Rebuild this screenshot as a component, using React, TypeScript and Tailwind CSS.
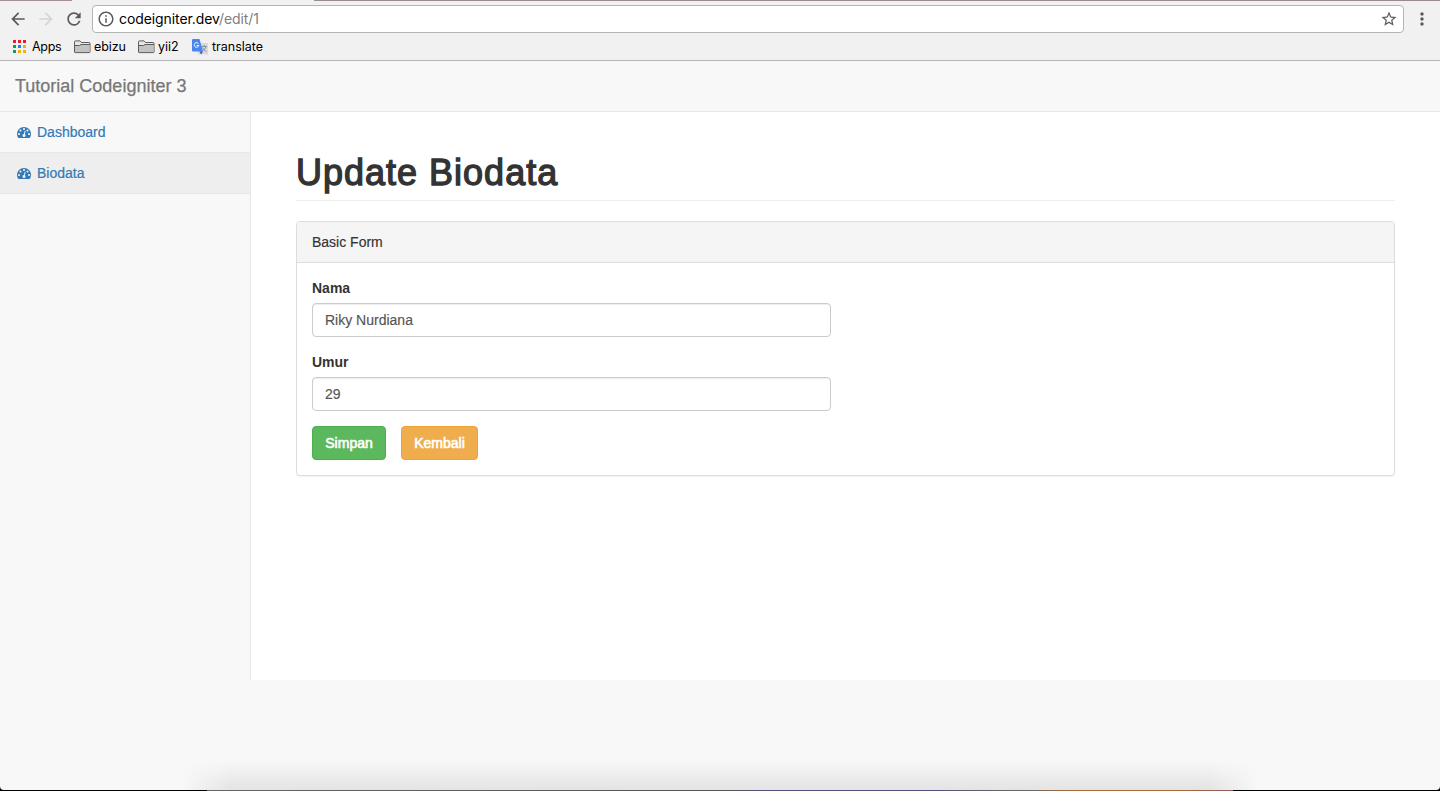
import React from 'react';
import { MdArrowBack, MdArrowForward, MdRefresh, MdStarBorder, MdInfoOutline, MdMoreVert } from 'react-icons/md';

const APP_DOTS = [
  'bg-[#ea1c24]', 'bg-[#ea1c24]', 'bg-[#ea1c24]',
  'bg-[#0f9d58]', 'bg-[#1a82f0]', 'bg-[#fbb000]',
  'bg-[#0f9d58]', 'bg-[#fbb000]', 'bg-[#fbb000]',
];

function Folder() {
  return (
    <svg width="17" height="14" viewBox="0 0 17 14" className="shrink-0">
      <path d="M.5 12V2Q.5.9 1.6.9H6l1.5 1.6h7.4q1.1 0 1.1 1.1V12q0 .6-.6.6H1.1Q.5 12.600.5 12z" fill="#e6e6e6" stroke="#5c5c5c" />
      <path d="M1 5.500h4.800L7.300 4H15.500V12H1z" fill="#c3c3c3" />
      <path d="M.5 5.500h5L7 4.500h9" fill="none" stroke="#5c5c5c" />
    </svg>
  );
}

function Translate() {
  return (
    <svg width="16" height="16" viewBox="0 0 16 16" className="shrink-0">
      <rect x="6" y="4" width="10" height="11.500" fill="#dadada" />
      <path d="M9.500 7.500h5.500M12.200 6V7.500m1.800 0q-.8 3-3.500 4.500M10.500 8.500q1 2.500 4 4" fill="none" stroke="#78909c" strokeWidth=".9" />
      <path d="M1 0h6.500l3.500 12.500H1q-1 0-1-1V1q0-1 1-1z" fill="#4a86ee" />
      <path d="M7.500 12.500H11L9 15.500z" fill="#3457c0" />
      <path d="M6.500 4.700A2.300 2.300 0 1 0 6.800 6.500H4.700" fill="none" stroke="#fff" strokeWidth="1" />
    </svg>
  );
}

function Gauge() {
  return (
    <svg width="14" height="14" viewBox="0 0 1792 1792" fill="currentColor" className="mx-0.5 -mt-px shrink-0">
      <path d="M384 1152q0-53-37.5-90.5t-90.5-37.5-90.5 37.5-37.5 90.5 37.5 90.5 90.5 37.5 90.5-37.5 37.5-90.5zm192-448q0-53-37.5-90.5t-90.5-37.5-90.5 37.5-37.5 90.5 37.5 90.5 90.5 37.5 90.5-37.5 37.5-90.5zm428 481l101-382q6-26-7.5-48.5t-38.5-29.5-48 6.500-30 39.500l-101 382q-60 5-107 43.500t-63 98.500q-20 77 20 146t117 89 146-20 89-117q16-60-6-117t-72-91zm660-33q0-53-37.5-90.5t-90.5-37.5-90.5 37.5-37.5 90.5 37.5 90.5 90.5 37.5 90.5-37.5 37.5-90.5zm-640-640q0-53-37.5-90.5t-90.5-37.5-90.5 37.5-37.5 90.5 37.5 90.5 90.5 37.5 90.5-37.5 37.5-90.5zm448 192q0-53-37.5-90.5t-90.5-37.5-90.5 37.5-37.5 90.5 37.5 90.5 90.5 37.5 90.5-37.5 37.5-90.5zm320 448q0 261-141 483-19 29-54 29h-1402q-35 0-54-29-141-221-141-483 0-182 71-348t191-286 286-191 348-71 348 71 286 191 191 286 71 348z" />
    </svg>
  );
}

function BrowserChrome() {
  return (
    <header className="h-[61px] shrink-0 border-b border-[#b6b4b6] bg-[#f2f1f2] font-['Inter',sans-serif]">
      <div className="flex h-px">
        <div className="w-[72px] bg-[#a38f8f]" />
        <div className="w-[242px]" />
        <div className="flex-1 bg-[#968b90]" />
      </div>
      <div className="flex h-9 items-center pl-2 text-[#5a5a5a]">
        <MdArrowBack size={20} />
        <MdArrowForward size={20} className="ml-2 text-[#d4d4d4]" />
        <MdRefresh size={20} className="ml-2" />
        <div className="ml-2 flex h-7 w-[1312px] items-center rounded-[4px] border border-[#b4b4b4] bg-white pr-[5px] pl-1">
          <MdInfoOutline size={18} />
          <span className="ml-1 flex-1 text-[14px] leading-5 tracking-[-0.09px] text-[#808080]">
            <span className="text-black">codeigniter.dev</span>/edit/1
          </span>
          <MdStarBorder size={18} />
        </div>
        <MdMoreVert size={20} className="ml-2" />
      </div>
      <nav className="flex h-[19px] items-center pl-[13px] text-[12.500px] leading-4 text-black">
        <div className="grid grid-cols-3 gap-[2px]">
          {APP_DOTS.map((c, i) => <span key={i} className={`size-[3px] ${c}`} />)}
        </div>
        <span className="ml-1.5 w-[42px] tracking-[-0.3px]">Apps</span>
        <Folder />
        <span className="ml-[3px] w-11 tracking-[-0.1px]">ebizu</span>
        <Folder />
        <span className="ml-[3px] w-[34px]">yii2</span>
        <Translate />
        <span className="ml-1">translate</span>
      </nav>
    </header>
  );
}

export default function App() {
  return (
    <div className="h-[791px] w-[1440px] overflow-hidden bg-black font-['Liberation_Sans',Arial,sans-serif] text-[14px] leading-5 text-[#333]">
      <div className="relative flex h-[790px] flex-col overflow-hidden rounded-b-[4px] bg-[#f8f8f8]">
        <BrowserChrome />
        <div className="flex h-[51px] shrink-0 items-center border-b border-[#e7e7e7] px-[15px] text-[18px] text-[#777] [-webkit-text-stroke:0.25px_#777]">
          <span>Tutorial Codeigniter 3</span>
        </div>
        <div className="flex h-[568px]">
          <aside className="w-[250px] text-[#337ab7] [-webkit-text-stroke:0.2px_#337ab7]">
            <a className="flex h-[41px] items-center border-b border-[#e7e7e7] px-[15px]"><Gauge /><span className="ml-1">Dashboard</span></a>
            <a className="flex h-[41px] items-center border-b border-[#e7e7e7] bg-[#eee] px-[15px]"><Gauge /><span className="ml-1">Biodata</span></a>
          </aside>
          <main className="flex-1 border-l border-[#e7e7e7] bg-white pt-10 pr-[45px] pl-[45px]">
            <h1 className="mb-5 h-[49px] border-b border-[#eee] pt-px text-[36px] leading-10 tracking-[1px] [-webkit-text-stroke:1.3px_#333]">
              <span>Update Biodata</span>
            </h1>
            <section className="h-[255px] rounded-[4px] border border-[#ddd] bg-white shadow-[0_1px_1px_rgba(0,0,0,0.05)]">
              <h2 className="h-[41px] rounded-t-[3px] border-b border-[#ddd] bg-[#f5f5f5] px-[15px] py-2.5 [-webkit-text-stroke:0.15px_#333]">Basic Form</h2>
              <form className="w-[549px] p-[15px]">
                <label className="mb-[5px] block font-bold">Nama</label>
                <input defaultValue="Riky Nurdiana" className="mb-[15px] block h-[34px] w-full rounded-[4px] border border-[#ccc] px-3 text-[#555] shadow-[inset_0_1px_1px_rgba(0,0,0,0.075)] [-webkit-text-stroke:0.15px_#555]" />
                <label className="mb-[5px] block font-bold">Umur</label>
                <input defaultValue="29" className="mb-[15px] block h-[34px] w-full rounded-[4px] border border-[#ccc] px-3 text-[#555] shadow-[inset_0_1px_1px_rgba(0,0,0,0.075)] [-webkit-text-stroke:0.15px_#555]" />
                <div className="flex gap-[15px] text-white [-webkit-text-stroke:0.6px_#fff]">
                  <button type="button" className="h-[34px] w-[74px] rounded-[4px] border border-[#4cae4c] bg-[#5cb85c]">Simpan</button>
                  <button type="button" className="h-[34px] w-[77px] rounded-[4px] border border-[#eea236] bg-[#f0ad4e]">Kembali</button>
                </div>
              </form>
            </section>
          </main>
        </div>
        <div className="absolute bottom-0 left-[180px] h-[30px] w-[1080px] bg-linear-to-b from-transparent to-black/8 [mask-image:linear-gradient(to_right,transparent,black_50px,black_calc(100%-50px),transparent)]" />
      </div>
      <div className="ml-[207px] h-px w-[1026px] bg-[linear-gradient(to_right,#666_0%,#555_50%,#50507c_55%,#50507c_70%,#666_78%,#666_80%,#a86a36_84%,#a86a36_94%,#945c5c_100%)]" />
    </div>
  );
}
